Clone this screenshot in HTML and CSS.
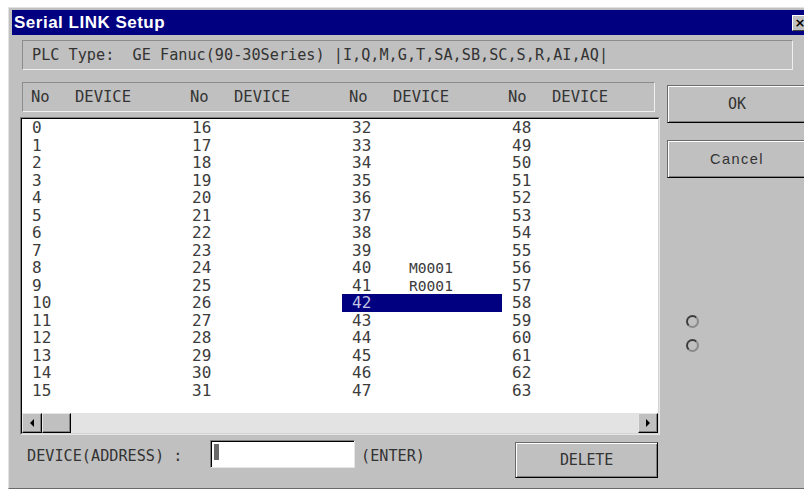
FILE: index.html
```html
<!DOCTYPE html>
<html lang="en">
<head>
<meta charset="utf-8">
<title>Serial LINK Setup</title>
<link rel="stylesheet" href="styles.css">
</head>
<body>
<div class="dialog">
  <div class="titlebar">
    <span class="title">Serial LINK Setup</span>
    <span class="close">×</span>
  </div>

  <div class="plc">PLC Type:  GE Fanuc(90-30Series) |I,Q,M,G,T,SA,SB,SC,S,R,AI,AQ|</div>

  <div class="main">
    <div class="left">
      <div class="header">
        <div class="hcell"><span class="hno">No</span><span>DEVICE</span></div>
        <div class="hcell"><span class="hno">No</span><span>DEVICE</span></div>
        <div class="hcell"><span class="hno">No</span><span>DEVICE</span></div>
        <div class="hcell"><span class="hno">No</span><span>DEVICE</span></div>
      </div>

      <div class="list">
        <div class="list-inner">
          <div class="rows">
            <div class="cell"><span class="no">0</span></div>
            <div class="cell"><span class="no">1</span></div>
            <div class="cell"><span class="no">2</span></div>
            <div class="cell"><span class="no">3</span></div>
            <div class="cell"><span class="no">4</span></div>
            <div class="cell"><span class="no">5</span></div>
            <div class="cell"><span class="no">6</span></div>
            <div class="cell"><span class="no">7</span></div>
            <div class="cell"><span class="no">8</span></div>
            <div class="cell"><span class="no">9</span></div>
            <div class="cell"><span class="no">10</span></div>
            <div class="cell"><span class="no">11</span></div>
            <div class="cell"><span class="no">12</span></div>
            <div class="cell"><span class="no">13</span></div>
            <div class="cell"><span class="no">14</span></div>
            <div class="cell"><span class="no">15</span></div>

            <div class="cell"><span class="no">16</span></div>
            <div class="cell"><span class="no">17</span></div>
            <div class="cell"><span class="no">18</span></div>
            <div class="cell"><span class="no">19</span></div>
            <div class="cell"><span class="no">20</span></div>
            <div class="cell"><span class="no">21</span></div>
            <div class="cell"><span class="no">22</span></div>
            <div class="cell"><span class="no">23</span></div>
            <div class="cell"><span class="no">24</span></div>
            <div class="cell"><span class="no">25</span></div>
            <div class="cell"><span class="no">26</span></div>
            <div class="cell"><span class="no">27</span></div>
            <div class="cell"><span class="no">28</span></div>
            <div class="cell"><span class="no">29</span></div>
            <div class="cell"><span class="no">30</span></div>
            <div class="cell"><span class="no">31</span></div>

            <div class="cell"><span class="no">32</span></div>
            <div class="cell"><span class="no">33</span></div>
            <div class="cell"><span class="no">34</span></div>
            <div class="cell"><span class="no">35</span></div>
            <div class="cell"><span class="no">36</span></div>
            <div class="cell"><span class="no">37</span></div>
            <div class="cell"><span class="no">38</span></div>
            <div class="cell"><span class="no">39</span></div>
            <div class="cell"><span class="no">40</span><span class="dev">M0001</span></div>
            <div class="cell"><span class="no">41</span><span class="dev">R0001</span></div>
            <div class="cell selected"><span class="no">42</span></div>
            <div class="cell"><span class="no">43</span></div>
            <div class="cell"><span class="no">44</span></div>
            <div class="cell"><span class="no">45</span></div>
            <div class="cell"><span class="no">46</span></div>
            <div class="cell"><span class="no">47</span></div>

            <div class="cell"><span class="no">48</span></div>
            <div class="cell"><span class="no">49</span></div>
            <div class="cell"><span class="no">50</span></div>
            <div class="cell"><span class="no">51</span></div>
            <div class="cell"><span class="no">52</span></div>
            <div class="cell"><span class="no">53</span></div>
            <div class="cell"><span class="no">54</span></div>
            <div class="cell"><span class="no">55</span></div>
            <div class="cell"><span class="no">56</span></div>
            <div class="cell"><span class="no">57</span></div>
            <div class="cell"><span class="no">58</span></div>
            <div class="cell"><span class="no">59</span></div>
            <div class="cell"><span class="no">60</span></div>
            <div class="cell"><span class="no">61</span></div>
            <div class="cell"><span class="no">62</span></div>
            <div class="cell"><span class="no">63</span></div>
          </div>

          <div class="hscroll">
            <div class="sbtn"><svg width="6" height="8" viewBox="0 0 6 8"><polygon points="5,0 5,8 1,4" fill="#000"/></svg></div>
            <div class="thumb"></div>
            <div class="track"></div>
            <div class="sbtn"><svg width="6" height="8" viewBox="0 0 6 8"><polygon points="1,0 1,8 5,4" fill="#000"/></svg></div>
          </div>
        </div>
      </div>

      <div class="entry">
        <span class="label">DEVICE(ADDRESS) :</span>
        <div class="input"><span class="caret"></span></div>
        <span class="hint">(ENTER)</span>
        <button class="btn delete">DELETE</button>
      </div>
    </div>

    <div class="right">
      <button class="btn side">OK</button>
      <button class="btn side cancel">Cancel</button>
      <div class="radios">
        <span class="radio"></span>
        <span class="radio"></span>
      </div>
    </div>
  </div>
</div>
</body>
</html>
```

FILE: styles.css
```css
html, body {
  margin: 0;
  padding: 0;
}

body {
  width: 804px;
  height: 490px;
  overflow: hidden;
  background: #ffffff;
  font-family: "DejaVu Sans Mono", "Liberation Mono", monospace;
  color: #333333;
}

/* dialog frame */
.dialog {
  box-sizing: border-box;
  width: 804px;
  height: 482px;
  margin: 7px 0 0 8px;
  padding: 2px 3px 0 3px;
  background: #c0c0c0;
  border: 1px solid;
  border-color: #e2e2e2 #404040 #6a6a6a #e2e2e2;
}

.titlebar {
  display: flex;
  align-items: center;
  justify-content: space-between;
  height: 25px;
  background: #000080;
}

.title {
  padding-left: 2px;
  font-family: "Liberation Sans", Arial, sans-serif;
  font-weight: bold;
  font-size: 17px;
  letter-spacing: 0.5px;
  color: #ffffff;
}

.close {
  box-sizing: border-box;
  width: 16px;
  height: 16px;
  background: #c0c0c0;
  border: 1px solid;
  border-color: #ffffff #404040 #404040 #ffffff;
  font-family: "DejaVu Sans", sans-serif;
  font-size: 13px;
  font-weight: bold;
  line-height: 13px;
  text-align: center;
  color: #000;
}

/* PLC type line */
.plc {
  box-sizing: border-box;
  width: 771px;
  height: 30px;
  margin: 5px 0 0 10px;
  padding-left: 9px;
  border: 1px solid;
  border-color: #8c8c8c #efefef #efefef #8c8c8c;
  font-size: 15.2px;
  line-height: 28px;
  white-space: pre;
  color: #333;
}

.main {
  display: flex;
  margin-top: 12px;
}

.left {
  display: flex;
  flex-direction: column;
  width: 640px;
  margin-left: 8px;
}

/* column header */
.header {
  box-sizing: border-box;
  display: grid;
  grid-template-columns: repeat(4, 159px);
  width: 633px;
  height: 30px;
  margin-left: 2px;
  border: 1px solid;
  border-color: #8c8c8c #efefef #efefef #8c8c8c;
  overflow: hidden;
  font-size: 15.5px;
  line-height: 28px;
  color: #333;
}

.hcell {
  display: flex;
  padding-left: 8px;
}

.hno {
  width: 44px;
}

/* device list */
.list {
  box-sizing: border-box;
  width: 640px;
  height: 318px;
  margin-top: 5px;
  border: 1px solid;
  border-color: #808080 #e6e6e6 #e6e6e6 #808080;
}

.list-inner {
  display: flex;
  flex-direction: column;
  height: 100%;
  box-sizing: border-box;
  border: 1px solid;
  border-color: #000 #d4d4d4 #d4d4d4 #000;
}

.rows {
  flex: 1;
  display: grid;
  grid-template-columns: repeat(4, 160px);
  grid-template-rows: repeat(16, 17.5px);
  grid-auto-flow: column;
  align-content: start;
  background: #ffffff;
  overflow: hidden;
}

.cell {
  display: flex;
  align-items: center;
  padding-left: 10px;
  font-size: 16px;
  line-height: 17px;
  color: #3c3c3c;
}

.cell .no {
  width: 57px;
}

.cell .dev {
  font-size: 14.6px;
}

.cell.selected {
  background: #000080;
  color: #c4c4e4;
}

/* horizontal scrollbar */
.hscroll {
  display: flex;
  height: 20px;
  background: #e3e3e3;
}

.sbtn {
  box-sizing: border-box;
  display: flex;
  align-items: center;
  justify-content: center;
  width: 20px;
  height: 20px;
  background: #c0c0c0;
  border: 1px solid;
  border-color: #e6e6e6 #000 #000 #e6e6e6;
  box-shadow: inset -1px -1px #808080;
}

.thumb {
  box-sizing: border-box;
  width: 29px;
  height: 20px;
  background: #c0c0c0;
  border: 1px solid;
  border-color: #e6e6e6 #000 #000 #e6e6e6;
  box-shadow: inset -1px -1px #808080;
}

.track {
  flex: 1;
}

/* address entry row */
.entry {
  display: flex;
  align-items: flex-start;
  height: 38px;
  margin-top: 5px;
  font-size: 15.2px;
  color: #333;
}

.label {
  width: 190px;
  padding: 2px 0 0 7px;
  box-sizing: border-box;
  line-height: 28px;
}

.input {
  box-sizing: border-box;
  width: 145px;
  height: 28px;
  padding: 3px 0 0 2px;
  background: #fff;
  border: 1px solid;
  border-color: #808080 #e6e6e6 #e6e6e6 #808080;
  box-shadow: inset 1px 1px #000;
}

.caret {
  display: block;
  width: 5px;
  height: 16px;
  margin-left: 1px;
  background: #6a6a6a;
}

.hint {
  margin-left: 6px;
  padding-top: 2px;
  line-height: 28px;
}

/* push buttons */
.btn {
  box-sizing: border-box;
  background: #c0c0c0;
  border: 1px solid;
  border-color: #6a6a6a #000 #000 #6a6a6a;
  box-shadow: inset 1px 1px #ffffff, inset -1px -1px #808080;
  font-family: "DejaVu Sans Mono", "Liberation Mono", monospace;
  font-size: 15px;
  color: #333;
  padding: 0;
}

.delete {
  width: 143px;
  height: 36px;
  margin: 2px 2px 0 auto;
  letter-spacing: -0.2px;
}

.right {
  display: flex;
  flex-direction: column;
  width: 140px;
  margin-left: 7px;
}

.side {
  width: 140px;
  height: 38px;
  margin-top: 3px;
}

.side.cancel {
  margin-top: 17px;
  font-family: "Liberation Sans", Arial, sans-serif;
  font-size: 14.5px;
  letter-spacing: 1.5px;
}

.radios {
  display: flex;
  flex-direction: column;
  gap: 11px;
  margin: 137px 0 0 19px;
}

/* round option marks: dark upper-left rim, softer lower-right rim */
.radio {
  box-sizing: border-box;
  width: 13px;
  height: 13px;
  border-radius: 50%;
  border: 2px solid;
  border-color: #3c3c3c #8a8a8a #8a8a8a #3c3c3c;
  background: #c0c0c0;
}
```
